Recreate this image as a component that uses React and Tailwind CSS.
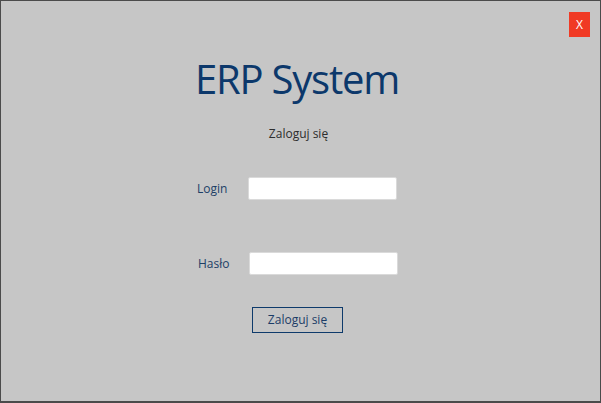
import React from 'react';

const App = () => {
    return (
        <div
            className="relative w-[601px] h-[403px] bg-[#c6c6c6] border border-[#4b4b4b] border-b-2 flex flex-col items-center"
            style={{ fontFamily: '"Open Sans", "Noto Sans", sans-serif' }}
        >
            {/* Close button */}
            <button className="absolute top-[11px] right-[10px] w-[21px] h-[25px] bg-[#f03a24] text-white text-[12px] leading-none flex items-center justify-center">
                X
            </button>

            <h1 className="mt-[53px] ml-[-7px] text-[40px] leading-[50px] text-[#0c386b] tracking-[-1.2px]">ERP System</h1>

            <p className="mt-[22px] ml-[-4px] text-[12px] leading-[16px] text-[#2d2d2d]">Zaloguj się</p>

            <div className="mt-[35px] ml-[-7px] flex items-center">
                <label className="w-[51px] text-[12px] text-[#1d3f66]">Login</label>
                <input type="text" className="w-[149px] h-[23px] bg-white rounded-[2px] border border-[#dadada] outline-none" />
            </div>

            <div className="mt-[52px] ml-[-5px] flex items-center">
                <label className="w-[51px] text-[12px] text-[#1d3f66]">Hasło</label>
                <input type="password" className="w-[149px] h-[23px] bg-white rounded-[2px] border border-[#dadada] outline-none" />
            </div>

            <button className="mt-[32px] ml-[-6px] w-[91px] h-[26px] border border-[#0d3a6b] text-[12px] text-[#1b3c66] leading-none">
                Zaloguj się
            </button>
        </div>
    );
};

export default App;
